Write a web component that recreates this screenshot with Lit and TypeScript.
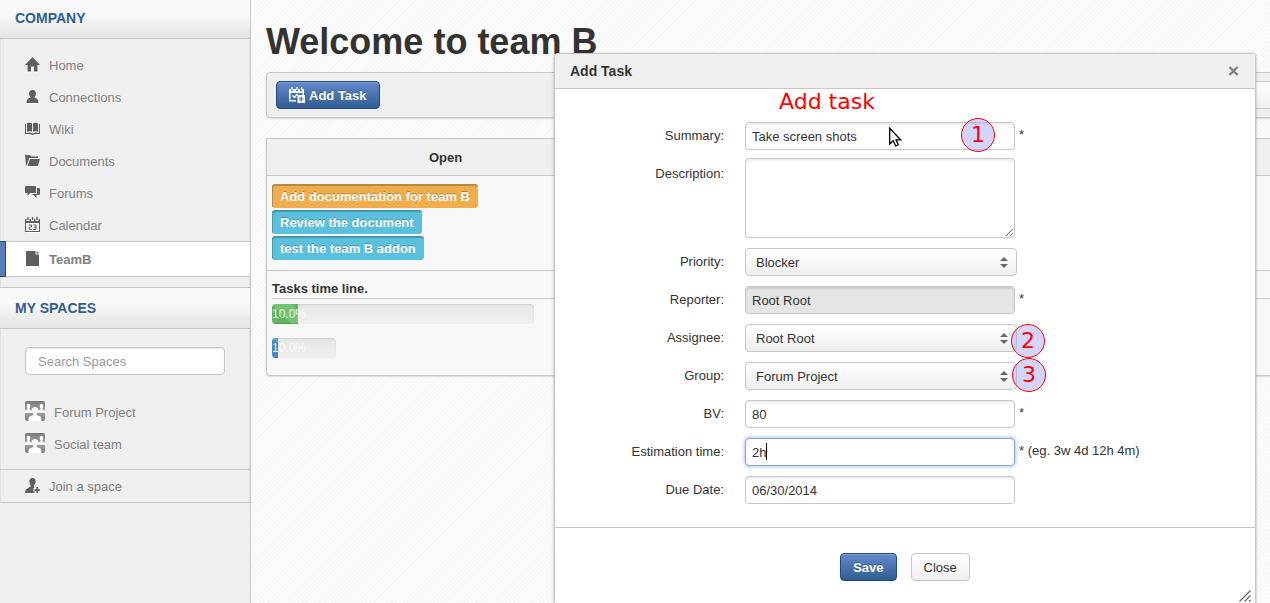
import { LitElement, html, css, svg, nothing } from "lit";
import { customElement } from "lit/decorators.js";
import { classMap } from "lit/directives/class-map.js";
import { styleMap } from "lit/directives/style-map.js";

const icons: Record<string, unknown> = {
  home: svg`<path d="M7.500 0 0 8h2.500v6.500H6V9.500h3v5h3.500V8H15z"/>`,
  person: svg`<path d="M7.500 1C5.300 1 4 2.600 4 4.600c0 1.600.7 3 1.700 3.800C3.400 9 1.500 10.200 1.500 14h12c0-3.800-1.900-5-4.200-5.600 1-.8 1.700-2.200 1.700-3.800C11 2.600 9.700 1 7.500 1z"/>`,
  book: svg`<path d="M2 2.200c2-.8 3.800-.6 5 .2v8.400c-1.400-.7-3-.8-5 0zM8 2.400c1.200-.8 3-1 5-.2v8.600c-2-.8-3.600-.7-5 0zM0 3h1v9c2.400-.7 4.600-.7 6.500.4C9.400 11.300 11.600 11.300 14 12V3h1v10.200c-2.800-.5-5 0-7.500.8-2.500-.8-4.700-1.300-7.500-.8z"/>`,
  folder: svg`<path d="M0 2h5l1.200 1.500H13V5H4.200L1.800 12.500H1z"/><path d="M5 6h10l-2.200 7H2.600z"/>`,
  chat: svg`<path d="M1.200 1h8.600C10.600 1 11 1.400 11 2.200v4.600C11 7.600 10.600 8 9.800 8H5.500L2.500 11V8H1.200C.4 8 0 7.600 0 6.800V2.200C0 1.400.4 1 1.200 1z"/><path d="M12 3h1.800c.8 0 1.200.4 1.200 1.200v4.600c0 .8-.4 1.200-1.200 1.200H11.500v3l-3-3H6.500L8 9h3c.7 0 1-.4 1-1z"/>`,
  calendar: svg`<path fill-rule="evenodd" d="M0 2h1.500v2h3V2H6v2h3V2h1.500v2h3V2H15v13H0zM1 6v8h13V6z"/><path d="M2.300 0h1.400v3H2.300zM6.800 0h1.400v3H6.800zM11.300 0h1.400v3h-1.400z"/><path fill="none" stroke="#5f5f5f" stroke-width="1" d="M3.800 8h2.700v2H4.300v2.500H7M8.500 8H11v4.500H8.300M9 10.200h2"/>`,
  page: svg`<path d="M1 0h9.500v3.500H14V15H1z"/><path d="M11.500 0 14 2.500h-2.500z"/>`,
  join: svg`<path d="M7.500 0C5.300 0 4.300 1.600 4.300 3.600c0 1.700.7 3 1.600 3.900-.2 2.500-5.900 2-5.900 7.500h9.500v-1.500h-1v-3.600h1.800C8.500 9.500 9 8.200 9 7.400c1-.9 1.700-2.200 1.700-3.800C10.700 1.600 9.700 0 7.500 0z"/><path d="M11.300 9h1.700v2.200h2v1.700h-2V15h-1.700v-2.100h-2v-1.700h2z"/>`,
};

const icon = (name: string) =>
  html`<svg class="icon" viewBox="0 0 15 15" width="15" height="15" aria-hidden="true">${icons[name]}</svg>`;

const teamIcon = html`<svg class="team" viewBox="0 0 20 20" width="20" height="20" aria-hidden="true">
  <defs><linearGradient id="tg" x1="0" y1="0" x2="0" y2="1"><stop offset="0" stop-color="#777"/><stop offset=".5" stop-color="#a2a2a2"/><stop offset="1" stop-color="#808080"/></linearGradient></defs>
  <rect width="20" height="20" rx="2" fill="url(#tg)"/>
  <g fill="#fff">
    <ellipse cx="3.500" cy="5" rx="1.800" ry="2.200"/><ellipse cx="16.500" cy="5" rx="1.800" ry="2.200"/>
    <path d="M2.500 6h2v2.400L7 9.500V12H0V9.500l2.500-1zM15.500 6h2v2.500l2.500 1V12h-7V9.500l2.500-1z"/>
    <path d="M10 6C7.800 6 6.800 7.500 6.800 9.300c0 1.600.7 2.800 1.600 3.600v1.200L4.600 15.600C3.800 16 3.500 18 3.500 20h13c0-2-.3-4-1.100-4.400l-3.800-1.500v-1.200c.9-.8 1.600-2 1.600-3.600C13.200 7.500 12.200 6 10 6z"/>
  </g></svg>`;

const menu = [
  ["home", "Home"],
  ["person", "Connections"],
  ["book", "Wiki"],
  ["folder", "Documents"],
  ["chat", "Forums"],
  ["calendar", "Calendar"],
  ["page", "TeamB"],
];

const tasks = [
  { text: "Add documentation for team B", kind: "warning" },
  { text: "Review the document", kind: "info" },
  { text: "test the team B addon", kind: "info" },
];

const timelines = [
  { length: 262, percent: 10, kind: "success" },
  { length: 64, percent: 10, kind: "primary" },
];

type Field = {
  id: string;
  label: string;
  type: "text" | "area" | "select";
  value?: string;
  note?: string;
  disabled?: boolean;
  active?: boolean;
};

const fields: Field[] = [
  { id: "summary", label: "Summary:", type: "text", value: "Take screen shots", note: "*" },
  { id: "description", label: "Description:", type: "area" },
  { id: "priority", label: "Priority:", type: "select", value: "Blocker" },
  { id: "reporter", label: "Reporter:", type: "text", value: "Root Root", note: "*", disabled: true },
  { id: "assignee", label: "Assignee:", type: "select", value: "Root Root" },
  { id: "group", label: "Group:", type: "select", value: "Forum Project" },
  { id: "bv", label: "BV:", type: "text", value: "80", note: "*" },
  { id: "estimation", label: "Estimation time:", type: "text", value: "2h", note: "* (eg. 3w 4d 12h 4m)", active: true },
  { id: "due", label: "Due Date:", type: "text", value: "06/30/2014" },
];

@customElement("side-bar")
class SideBar extends LitElement {
  static styles = css`
    :host {
      display: block;
      box-sizing: border-box;
      width: 251px;
      flex: none;
      background: #efefef;
      border-right: 1px solid #c7c7c7;
      color: #808080;
    }
    *, *::before { box-sizing: border-box; }
    .heading {
      margin: 0;
      padding: 10px 15px;
      border: solid #c7c7c7;
      border-width: 1px 0;
      background: linear-gradient(#f9f9f9, #f8f8f8 40%, #e4e4e4);
      color: #2f5e92;
      font-size: 14px;
      line-height: 20px;
      font-weight: bold;
    }
    .heading.first { border-top: 0; padding: 8px 15px 10px; }
    .section { box-shadow: inset 1px 0 #e2e2e2, inset -1px 0 #e2e2e2; }
    .list { list-style: none; margin: 0; padding: 10px 0; }
    .item {
      display: flex;
      align-items: center;
      gap: 9px;
      height: 32px;
      padding: 0 25px;
      color: inherit;
      text-decoration: none;
    }
    .text { padding-top: 2px; }
    .space .text { padding-top: 4px; }
    .item.current {
      position: relative;
      height: 36px;
      background: #fff;
      border: solid #c7c7c7;
      border-width: 1px 0;
      font-weight: bold;
    }
    .item.current::before {
      content: "";
      position: absolute;
      left: 0;
      top: -1px;
      bottom: -1px;
      width: 6px;
      background: #5a7db9;
      border: 1px solid #224886;
      border-left: 0;
    }
    .icon { margin-bottom: 2px; fill: #5f5f5f; filter: drop-shadow(0 1px 0 #fff); }
    .search {
      display: block;
      width: 200px;
      height: 28px;
      padding: 0 12px;
      border: 1px solid #c7c7c7;
      border-radius: 4px;
      background: #fff;
      box-shadow: inset 0 1px 2px rgba(0, 0, 0, 0.1);
      font: inherit;
    }
    .search::placeholder { color: #999; opacity: 1; }
    .find { padding: 18px 25px 10px; }
    .join { border: solid #c7c7c7; border-width: 1px 0; height: 34px; }
  `;

  render() {
    return html`
      <h2 class="heading first">COMPANY</h2>
      <nav class="section">
        <ul class="list">
          ${menu.map(
            ([glyph, text]) => html`<li>
              <a href="#" class=${classMap({ item: true, current: text === "TeamB" })}>${icon(glyph)}<span class="text">${text}</span></a>
            </li>`,
          )}
        </ul>
      </nav>
      <h2 class="heading">MY SPACES</h2>
      <div class="section">
        <div class="find"><input class="search" type="text" placeholder="Search Spaces" aria-label="Search Spaces" /></div>
        <ul class="list">
          ${["Forum Project", "Social team"].map(
            (s) => html`<li><a class="item space" href="#">${teamIcon}<span class="text">${s}</span></a></li>`,
          )}
        </ul>
        <a class="item join" href="#">${icon("join")}<span class="text">Join a space</span></a>
      </div>
    `;
  }
}

@customElement("task-board")
class TaskBoard extends LitElement {
  static styles = css`
    :host { display: block; min-width: 1100px; }
    * { box-sizing: border-box; }
    .title { margin: 0 0 10px; font-size: 36px; line-height: 40px; color: #333; }
    .toolbar {
      display: flex;
      justify-content: space-between;
      padding: 8px 9px;
      background: #efefef;
      border: 1px solid #c7c7c7;
      border-radius: 4px;
      box-shadow: 0 1px 2px rgba(0, 0, 0, 0.12);
    }
    .add {
      display: flex;
      align-items: center;
      gap: 4px;
      height: 28px;
      padding: 0 12px;
      border: 1px solid #224886;
      border-radius: 4px;
      background: linear-gradient(#638acd, #2f5e92);
      box-shadow: inset 0 1px rgba(255, 255, 255, 0.2);
      color: #fff;
      font: inherit;
      font-weight: bold;
      text-shadow: 0 -1px rgba(0, 0, 0, 0.25);
    }
    .text { padding-top: 2px; }
    .filter {
      width: 150px;
      height: 28px;
      appearance: none;
      border: 1px solid #c7c7c7;
      border-radius: 4px;
      background: linear-gradient(#fff, #efefef);
    }
    .board {
      width: 100%;
      margin-top: 20px;
      table-layout: fixed;
      border: 1px solid #c7c7c7;
      border-radius: 0 0 4px 4px;
      border-spacing: 0;
      background: #f8f8f8;
      box-shadow: 0 1px 2px rgba(0, 0, 0, 0.12);
    }
    .first { width: 357px; }
    .head { height: 37px; padding: 2px 5px 0; background: #efefef; border-bottom: 1px solid #c7c7c7; }
    .cell { padding: 8px 5px 10px; border-bottom: 1px solid #c7c7c7; vertical-align: top; }
    .stack { display: flex; flex-direction: column; align-items: flex-start; gap: 2px; }
    .task {
      padding: 3px 8px 1px;
      line-height: 20px;
      border-radius: 3px;
      color: #fff;
      font-weight: bold;
      box-shadow: inset 1px 2px 1px rgba(0, 0, 0, 0.22);
      text-shadow: 0 -1px rgba(0, 0, 0, 0.25);
    }
    .warning { background: #f0ad4e; }
    .info { background: #5bc0de; }
    .timeline { padding: 9px 0 17px 5px; }
    .caption { margin: 0 0 5px; border-bottom: 1px solid #c7c7c7; font-size: 13px; line-height: 18px; }
    .bar {
      height: 20px;
      margin-bottom: 14px;
      border-radius: 4px;
      overflow: hidden;
      background: linear-gradient(#e6e6e6, #f0f0f0);
      box-shadow: inset 0 1px 2px rgba(0, 0, 0, 0.1);
    }
    .bar:last-child { margin-bottom: 0; }
    .fill {
      height: 100%;
      color: rgba(255, 255, 255, 0.9);
      font-size: 12px;
      line-height: 20px;
      white-space: nowrap;
      background-image: linear-gradient(45deg, rgba(255, 255, 255, 0.15) 25%, transparent 25%, transparent 50%, rgba(255, 255, 255, 0.15) 50%, rgba(255, 255, 255, 0.15) 75%, transparent 75%);
      background-size: 40px 40px;
      box-shadow: inset 0 -1px rgba(0, 0, 0, 0.15);
    }
    .success { background-color: #5cb85c; }
    .primary { background-color: #428bca; }
  `;

  render() {
    return html`
      <h1 class="title">Welcome to team B</h1>
      <div class="toolbar">
        <button class="add" type="button">
          <svg viewBox="0 0 16 16" width="16" height="16" aria-hidden="true">
            <path fill="#fff" fill-rule="evenodd" d="M0 2h2v2h2V2h3v2h2V2h2v2h2V2h2v6h-1.500V6h-12v7H7v1.500H0z" />
            <path fill="#fff" d="M2.400 0h1.300v3H2.400zM7.300 0h1.300v3H7.300zM12 0h1.300v3H12z" />
            <path fill="none" stroke="#fff" stroke-width="1.400" d="m3.500 8.500 2 2 3-3.500" />
            <path fill="#fff" fill-rule="evenodd" d="M8.500 8H16v8H8.500zM11.600 9.400v2H9.700v1.200h1.900v2h1.200v-2h1.900v-1.200h-1.900v-2z" />
          </svg>
          <span class="text">Add Task</span>
        </button>
        <select class="filter" aria-label="Filter"></select>
      </div>
      <table class="board">
        <thead>
          <tr><th class="head first">Open</th><th class="head"></th><th class="head"></th></tr>
        </thead>
        <tbody>
          <tr>
            <td class="cell">
              <div class="stack">${tasks.map((t) => html`<span class="task ${t.kind}">${t.text}</span>`)}</div>
            </td>
            <td class="cell"></td>
            <td class="cell"></td>
          </tr>
          <tr>
            <td class="timeline" colspan="3">
              <h2 class="caption">Tasks time line.</h2>
              ${timelines.map(
                (t) => html`<div class="bar" style=${styleMap({ width: `${t.length}px` })}>
                  <div class="fill ${t.kind}" style=${styleMap({ width: `${t.percent}%` })}>${t.percent.toFixed(1)}%</div>
                </div>`,
              )}
            </td>
          </tr>
        </tbody>
      </table>
    `;
  }
}

@customElement("task-dialog")
class TaskDialog extends LitElement {
  static styles = css`
    :host {
      display: flex;
      flex-direction: column;
      box-sizing: border-box;
      background: #fff;
      border: 1px solid #c7c7c7;
      border-bottom: 0;
      border-radius: 4px 4px 0 0;
      box-shadow: 0 1px 3px rgba(0, 0, 0, 0.3);
    }
    * { box-sizing: border-box; }
    .header {
      display: flex;
      align-items: center;
      justify-content: space-between;
      height: 35px;
      padding: 0 15px;
      background: #efefef;
      border-bottom: 1px solid #c7c7c7;
      border-radius: 3px 3px 0 0;
    }
    .name { margin: 0; font-size: 14px; }
    .dismiss { display: flex; padding: 1px; border: 0; background: none; }
    .form { display: flex; flex-direction: column; flex: 1; }
    .fields { display: flex; flex-direction: column; gap: 10px; padding: 33px 0 23px; }
    .field { display: flex; align-items: flex-start; }
    .label { width: 170px; padding: 4px 1px 0 0; margin-right: 20px; line-height: 20px; text-align: right; }
    .note { padding: 3px 0 0 4px; line-height: 20px; }
    .control {
      display: block;
      width: 270px;
      height: 28px;
      padding: 0 6px;
      border: 1px solid #c7c7c7;
      border-radius: 4px;
      background: #fff;
      box-shadow: inset 0 2px 2px rgba(0, 0, 0, 0.07);
      color: #333;
      font: inherit;
      outline: none;
    }
    .control:disabled { background: #e5e5e5; box-shadow: inset 0 2px 2px rgba(0, 0, 0, 0.12); opacity: 1; }
    .control.active { border-color: #8ba9de; box-shadow: 0 0 4px #8ba9de; }
    .area { height: 80px; margin: -2px 0 0; resize: both; }
    .pick, .box { position: relative; }
    .select {
      appearance: none;
      width: 272px;
      padding: 1px 10px 0;
      background: linear-gradient(#fff, #efefef);
      box-shadow: none;
    }
    .arrows { position: absolute; right: 9px; top: 9px; pointer-events: none; fill: #666; }
    .caret { position: absolute; left: 21px; top: 5px; width: 1px; height: 17px; background: #000; }
    .actions {
      display: flex;
      justify-content: center;
      gap: 14px;
      padding: 25px 0 22px;
      border-top: 1px solid #c7c7c7;
    }
    .button {
      height: 28px;
      padding: 2px 12px 0;
      border: 1px solid #c7c7c7;
      border-radius: 4px;
      background: linear-gradient(#fff, #efefef);
      color: #333;
      font: inherit;
    }
    .save {
      border-color: #224886;
      background: linear-gradient(#638acd, #2f5e92);
      box-shadow: inset 0 1px rgba(255, 255, 255, 0.2);
      color: #fff;
      font-weight: bold;
      text-shadow: 0 -1px rgba(0, 0, 0, 0.25);
    }
    .grip { position: absolute; right: 4px; bottom: 1px; }
  `;

  private control(f: Field) {
    if (f.type === "area") return html`<textarea class="control area" id=${f.id}></textarea>`;
    if (f.type === "select")
      return html`<span class="pick">
        <select class="control select" id=${f.id}><option>${f.value}</option></select>
        <svg class="arrows" viewBox="0 0 8 11" width="8" height="11" aria-hidden="true"><path d="M4 0 8 4H0zM0 7h8l-4 4z" /></svg>
      </span>`;
    return html`<span class="box">
      <input class=${classMap({ control: true, active: !!f.active })} type="text" id=${f.id} .value=${f.value ?? ""} ?disabled=${f.disabled} />
      ${f.active ? html`<span class="caret"></span>` : nothing}
    </span>`;
  }

  render() {
    return html`
      <header class="header">
        <h2 class="name">Add Task</h2>
        <button class="dismiss" type="button" aria-label="Dismiss">
          <svg viewBox="0 0 11 10" width="11" height="10" aria-hidden="true"><path d="m1.500 1 8 8m0-8-8 8" stroke="#808080" stroke-width="2.400" /></svg>
        </button>
      </header>
      <form class="form">
        <div class="fields">
          ${fields.map(
            (f) => html`<div class="field">
              <label class="label" for=${f.id}>${f.label}</label>
              ${this.control(f)} ${f.note ? html`<span class="note">${f.note}</span>` : nothing}
            </div>`,
          )}
        </div>
        <div class="actions">
          <button class="button save" type="button">Save</button>
          <button class="button" type="button">Close</button>
        </div>
      </form>
      <svg class="grip" viewBox="0 0 12 12" width="12" height="12" aria-hidden="true">
        <path d="M.5 11.500 11.500.5M5.500 11.500l6-6M10 11.500l1.500-1.500" stroke="#666" stroke-width="1.300" fill="none" />
      </svg>
    `;
  }
}

@customElement("app-root")
class AppRoot extends LitElement {
  static styles = css`
    :host {
      display: flex;
      position: relative;
      min-height: 100vh;
      overflow: hidden;
      color: #333;
      font: 13px/20px "Liberation Sans", Arial, sans-serif;
      background: repeating-linear-gradient(135deg, #f7f7f7 0 1px, #fbfbfb 1px 3px);
    }
    .content { flex: 1; min-width: 0; overflow: hidden; padding: 22px 0 0 15px; }
    .dialog { position: absolute; left: 554px; right: 14px; top: 53px; bottom: 0; }
    .remark, .step { position: absolute; color: #f00; font: 22px/32px "DejaVu Sans", sans-serif; }
    .remark { left: 779px; top: 86px; }
    .step {
      box-sizing: border-box;
      width: 34px;
      height: 34px;
      border: 1px solid #f00;
      border-radius: 50%;
      background: rgba(170, 170, 255, 0.5);
      text-align: center;
    }
    .one { left: 961px; top: 118px; }
    .two { left: 1011px; top: 324px; }
    .three { left: 1012px; top: 358px; }
    .pointer { position: absolute; left: 889px; top: 127px; }
  `;

  render() {
    return html`
      <side-bar></side-bar>
      <main class="content"><task-board></task-board></main>
      <task-dialog class="dialog" role="dialog" aria-label="Add Task"></task-dialog>
      <span class="remark">Add task</span>
      <span class="step one">1</span>
      <span class="step two">2</span>
      <span class="step three">3</span>
      <svg class="pointer" viewBox="0 0 13 20" width="13" height="20" aria-hidden="true">
        <path d="M.7 1.200V17l3.500-3.300L6.700 19l2.600-1.200L7 12.800h4.600z" fill="#fff" stroke="#000" stroke-width="1.300" />
      </svg>
    `;
  }
}
